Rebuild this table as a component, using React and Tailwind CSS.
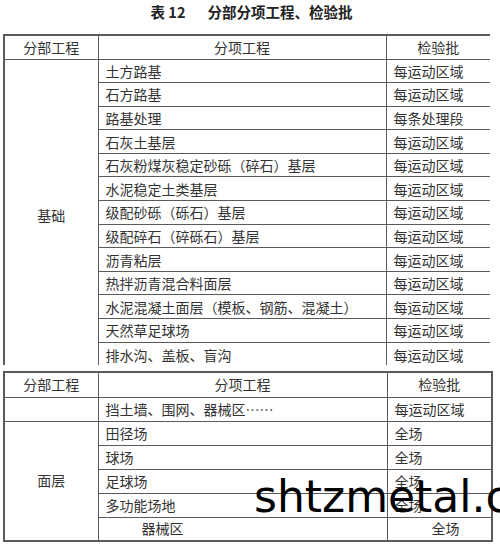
const rows1 = [
  ["土方路基", "每运动区域"],
  ["石方路基", "每运动区域"],
  ["路基处理", "每条处理段"],
  ["石灰土基层", "每运动区域"],
  ["石灰粉煤灰稳定砂砾（碎石）基层", "每运动区域"],
  ["水泥稳定土类基层", "每运动区域"],
  ["级配砂砾（砾石）基层", "每运动区域"],
  ["级配碎石（碎砾石）基层", "每运动区域"],
  ["沥青粘层", "每运动区域"],
  ["热拌沥青混合料面层", "每运动区域"],
  ["水泥混凝土面层（模板、钢筋、混凝土）", "每运动区域"],
  ["天然草足球场", "每运动区域"],
  ["排水沟、盖板、盲沟", "每运动区域"],
];

const rows2 = ["田径场", "球场", "足球场", "多功能场地"];

const cell = "border border-[#5a5a5a] p-0 align-middle";

const App = () => {
  return (
    <div
      className="relative w-[500px] h-[545px] overflow-hidden bg-white text-[14px] text-[#333]"
      style={{ fontFamily: '"Noto Sans CJK SC", "Liberation Sans", sans-serif' }}
    >
      {/* title */}
      <div className="h-[34px] pt-[3px] flex justify-center items-start leading-[18px] font-bold text-[#222] text-[14.5px]">
        <span className="pl-[3px]">表 12</span>
        <span className="ml-[22px]">分部分项工程、检验批</span>
      </div>

      {/* table part 1 (cut off at the bottom) */}
      <div className="ml-[3px] w-[487px] h-[331px] overflow-hidden">
        <table className="w-[487px] table-fixed border-collapse border-2 border-[#5a5a5a]">
          <colgroup>
            <col className="w-[94px]" />
            <col className="w-[288px]" />
            <col className="w-[105px]" />
          </colgroup>
          <tbody>
            <tr className="h-[24px]">
              <td className={`${cell} text-center`}>分部工程</td>
              <td className={`${cell} text-center`}>分项工程</td>
              <td className={`${cell} text-center`}>检验批</td>
            </tr>
            {rows1.map((r, i) => {
              const last = i === rows1.length - 1;
              const c = last
                ? "border border-[#5a5a5a] p-0 pt-[1px] align-top pl-[7px] leading-[22px]"
                : `${cell} pl-[7px] leading-[22px]`;
              return (
                <tr key={i} className={last ? "h-[30px]" : "h-[23.6px]"}>
                  {i === 0 && (
                    <td rowSpan={rows1.length} className={`${cell} text-center`}>
                      基础
                    </td>
                  )}
                  <td className={c}>{r[0]}</td>
                  <td className={c}>{r[1]}</td>
                </tr>
              );
            })}
          </tbody>
        </table>
      </div>

      {/* table part 2 */}
      <div className="ml-[3px] mt-[6px] w-[488px]">
        <table className="w-[488px] table-fixed border-collapse border-2 border-[#5a5a5a]">
          <colgroup>
            <col className="w-[94px]" />
            <col className="w-[289px]" />
            <col className="w-[105px]" />
          </colgroup>
          <tbody>
            <tr className="h-[25px]">
              <td className={`${cell} text-center`}>分部工程</td>
              <td className={`${cell} text-center`}>分项工程</td>
              <td className={`${cell} text-center`}>检验批</td>
            </tr>
            <tr className="h-[24px]">
              <td className={cell}></td>
              <td className={`${cell} pl-[7px]`}>挡土墙、围网、器械区……</td>
              <td className={`${cell} pl-[7px]`}>每运动区域</td>
            </tr>
            {rows2.map((name, i) => (
              <tr key={name} className="h-[24px]">
                {i === 0 && (
                  <td rowSpan={5} className={`${cell} text-center`}>
                    面层
                  </td>
                )}
                <td className={`${cell} pl-[7px]`}>{name}</td>
                <td className={`${cell} pl-[7px]`}>全场</td>
              </tr>
            ))}
            <tr className="h-[24px]">
              <td className={`${cell} pl-[43px]`}>器械区</td>
              <td className={`${cell} pl-[44px]`}>全场</td>
            </tr>
          </tbody>
        </table>
      </div>

      {/* watermark */}
      <div
        className="absolute left-[254px] top-[467px] text-[44px] leading-[60px] text-black whitespace-nowrap"
        style={{ fontFamily: '"DejaVu Sans", sans-serif' }}
      >
        shtzmetal.com
      </div>
    </div>
  );
};

export default App;
